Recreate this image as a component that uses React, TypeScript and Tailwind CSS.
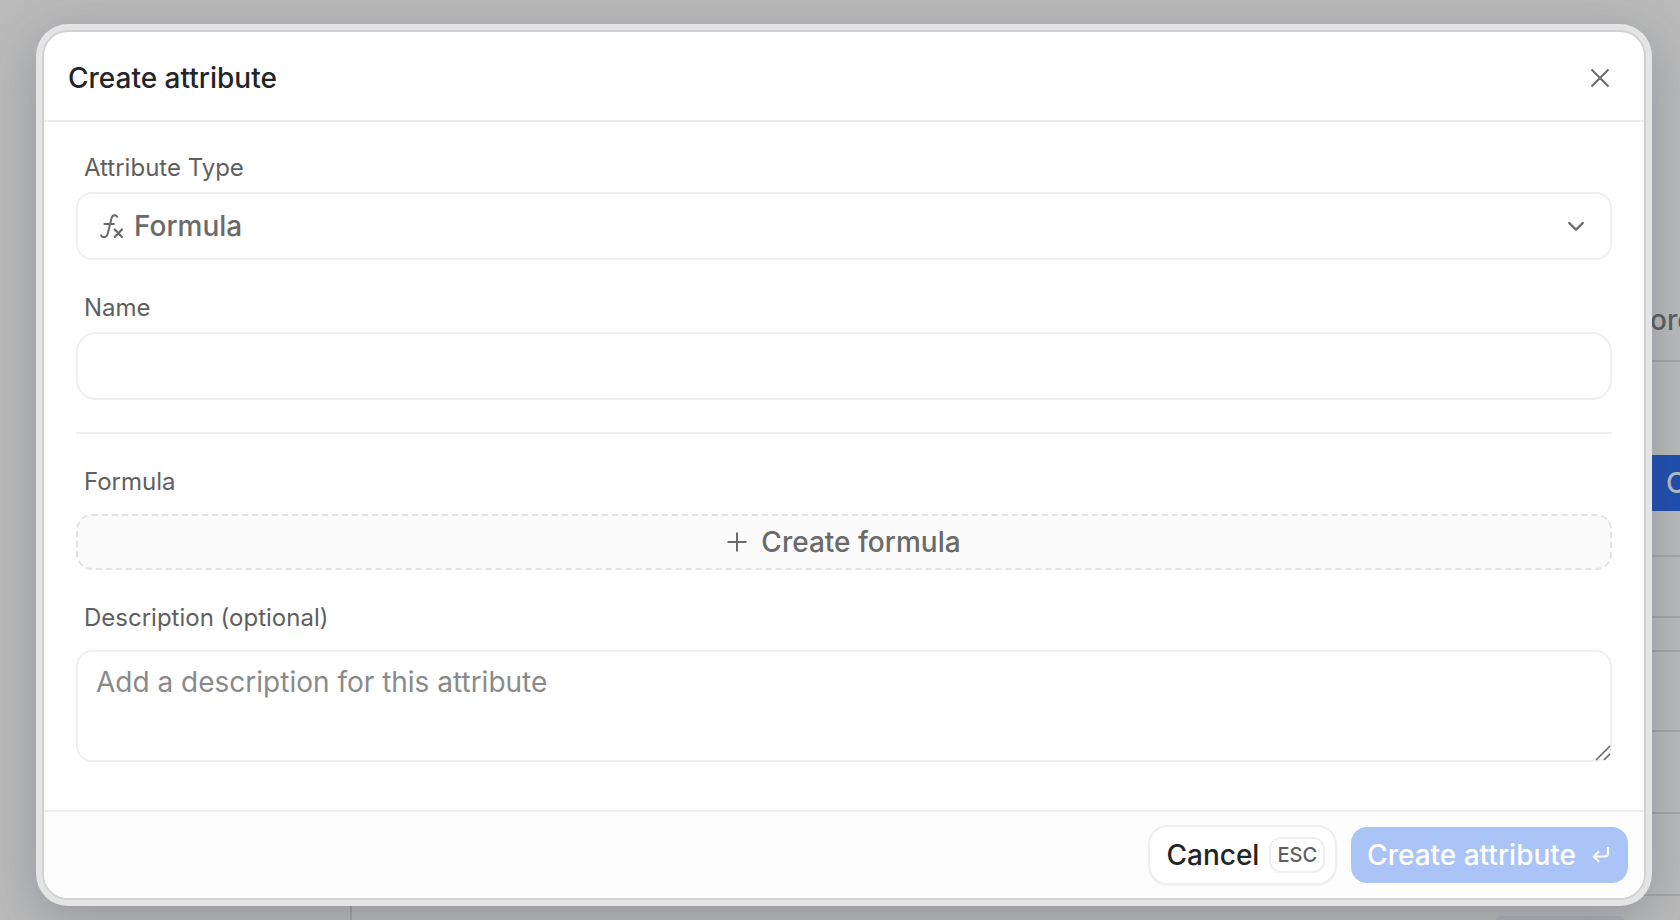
import type { ReactNode } from "react";

function CloseIcon() {
  return (
    <svg width="20" height="20" viewBox="0 0 20 20" fill="none" stroke="currentColor" strokeWidth="2" aria-hidden="true">
      <path d="M1.5 1.5 18.5 18.5M18.5 1.5 1.5 18.5" />
    </svg>
  );
}

function FormulaIcon() {
  return (
    <svg width="26" height="28" viewBox="0 0 26 28" fill="none" stroke="currentColor" strokeWidth="2" strokeLinecap="round" strokeLinejoin="round" aria-hidden="true">
      <path d="M17.2 4.8C16.2 2.6 12.6 2.4 11.5 6.2L7.8 21.4C6.8 25.4 2.8 26.2 1.2 23.4" />
      <path d="M4.4 12H13.8" />
      <path d="M14.8 17.4 22 25M22 17.4 14.8 25" strokeWidth="2.2" />
    </svg>
  );
}

function ChevronDownIcon() {
  return (
    <svg width="18" height="10" viewBox="0 0 18 10" fill="none" stroke="currentColor" strokeWidth="2.2" aria-hidden="true">
      <path d="M1.5 1.2 9 8.6 16.5 1.2" strokeLinejoin="round" />
    </svg>
  );
}

function PlusIcon() {
  return (
    <svg width="20" height="20" viewBox="0 0 20 20" fill="none" stroke="currentColor" strokeWidth="2" aria-hidden="true">
      <path d="M10 0.5V19.5M0.5 10H19.5" />
    </svg>
  );
}

function ReturnIcon() {
  return (
    <svg width="18" height="18" viewBox="0 0 18 18" fill="none" stroke="currentColor" strokeWidth="2" strokeLinejoin="round" aria-hidden="true">
      <path d="M16 1V7.5C16 9.4 14.8 10.5 13 10.5H2" />
      <path d="M7 5.2 1.8 10.5 7 15.8" />
    </svg>
  );
}

function ResizeGrip() {
  return (
    <svg width="18" height="18" viewBox="0 0 18 18" fill="none" stroke="#6a6a6b" strokeWidth="1.6" aria-hidden="true">
      <path d="M2 16 16 2M10 16 16 10" />
    </svg>
  );
}

function Label({ htmlFor, children }: { htmlFor: string; children: ReactNode }) {
  return (
    <label htmlFor={htmlFor} className="block px-2 text-2xl leading-8 text-[#5f5f60]">
      {children}
    </label>
  );
}

function PageBehind() {
  return (
    <div aria-hidden="true" className="col-start-1 row-start-1 flex overflow-hidden bg-[#bababa]">
      <div className="flex w-[352px] shrink-0 items-end">
        <div className="h-1/2 w-full border-r-2 border-[#a2a2a4]" />
      </div>
      <div className="flex flex-1 flex-col">
        <div className="flex h-[362px] items-end justify-end border-b-2 border-[#a5a5a8] pb-[22px]">
          <span className="w-[30px] text-[28px] leading-9 font-medium text-[#5c5c5d]">ore</span>
        </div>
        <div className="flex h-[195px] items-end justify-end border-b-2 border-[#a5a5a8] pb-11">
          <span className="flex h-14 w-7 items-center bg-[#1e4eae] pl-3.5 text-[28px] font-medium text-[#b9bcc2]">C</span>
        </div>
        <div className="h-[61px] border-b-2 border-[#a5a5a8]" />
        <div className="h-[34px] border-b-2 border-[#a5a5a8]" />
        <div className="h-20 border-b-2 border-[#a5a5a8]" />
        <div className="h-[82px] border-b-2 border-[#a5a5a8]" />
        <div className="h-[82px] border-b-2 border-[#a5a5a8]" />
        <div className="flex flex-1 items-end justify-end pr-14">
          <div className="h-1 w-32 rounded-t-lg bg-[#aeaeb1]" />
        </div>
      </div>
    </div>
  );
}

export default function App() {
  return (
    <div className="grid min-h-screen grid-cols-1 overflow-hidden font-[Inter,sans-serif]">
      <PageBehind />

      <div className="z-10 col-start-1 row-start-1 pt-6 pr-7 pb-3 pl-9">
        <div className="rounded-[32px] bg-[#e4e4e4] p-1.5 shadow-[0_12px_48px_rgba(60,68,90,0.3)]">
          <section role="dialog" aria-labelledby="dialog-title" className="overflow-hidden rounded-[26px] border-2 border-[#d2d2d2] bg-white">
            <header className="flex items-center justify-between border-b-2 border-[#ececec] pt-[26px] pr-8 pb-[22px] pl-6">
              <h1 id="dialog-title" className="text-[28px] leading-10 font-medium text-[#242529]">
                Create attribute
              </h1>
              <button type="button" aria-label="Close" className="p-0.5 text-[#6a6a6b]">
                <CloseIcon />
              </button>
            </header>

            <form id="attribute-form" className="px-8 pt-[30px] pb-12">
              <Label htmlFor="type">Attribute Type</Label>
              <div className="mt-2 grid items-center text-[#6a6a6b]">
                <span className="pointer-events-none z-10 col-start-1 row-start-1 ml-6 justify-self-start">
                  <FormulaIcon />
                </span>
                <select
                  id="type"
                  className="col-start-1 row-start-1 h-[68px] w-full appearance-none rounded-2xl border-2 border-[#efefef] bg-white pr-16 pl-14 text-[28px] font-medium"
                >
                  <option>Formula</option>
                </select>
                <span className="pointer-events-none z-10 col-start-1 row-start-1 mr-[27px] justify-self-end">
                  <ChevronDownIcon />
                </span>
              </div>

              <div className="mt-8">
                <Label htmlFor="name">Name</Label>
                <input id="name" type="text" className="mt-2 block h-[68px] w-full rounded-[20px] border-2 border-[#efefef] px-5 text-[28px]" />
              </div>

              <hr className="mt-8 border-t-2 border-[#efefef]" />

              <div className="mt-8">
                <Label htmlFor="formula">Formula</Label>
                <button
                  id="formula"
                  type="button"
                  className="mt-4 flex h-14 w-full items-center justify-center gap-3.5 rounded-2xl border-2 border-dashed border-[#e3e3e3] bg-[#fbfbfb] text-[28px] font-medium text-[#6a6a6b]"
                >
                  <PlusIcon />
                  Create formula
                </button>
              </div>

              <div className="mt-8">
                <Label htmlFor="description">Description (optional)</Label>
                <div className="mt-4 grid">
                  <textarea
                    id="description"
                    placeholder="Add a description for this attribute"
                    className="col-start-1 row-start-1 block h-28 w-full resize-none rounded-2xl border-2 border-[#efefef] px-[18px] py-2.5 text-[28px] leading-10 placeholder:text-[#8a8a8b]"
                  />
                  <span className="pointer-events-none z-10 col-start-1 row-start-1 self-end justify-self-end">
                    <ResizeGrip />
                  </span>
                </div>
              </div>
            </form>

            <footer className="flex items-center justify-end gap-3.5 border-t-2 border-[#efefef] bg-[#fdfdfd] px-4 py-[13px]">
              <button
                type="button"
                className="flex h-[60px] items-center gap-2.5 rounded-[20px] border-2 border-[#efefef] bg-white pr-2.5 pl-4 text-[28px] font-medium text-[#242529] shadow-xs"
              >
                Cancel
                <kbd className="flex h-9 items-center rounded-xl border-2 border-[#efefef] px-1.5 font-[Inter,sans-serif] text-xl text-[#5f5f60]">
                  ESC
                </kbd>
              </button>
              <button
                type="submit"
                form="attribute-form"
                className="flex h-14 items-center gap-4 rounded-2xl bg-[#abc4f8] pr-[18px] pl-4 text-[28px] font-medium text-white"
              >
                Create attribute
                <ReturnIcon />
              </button>
            </footer>
          </section>
        </div>
      </div>
    </div>
  );
}
